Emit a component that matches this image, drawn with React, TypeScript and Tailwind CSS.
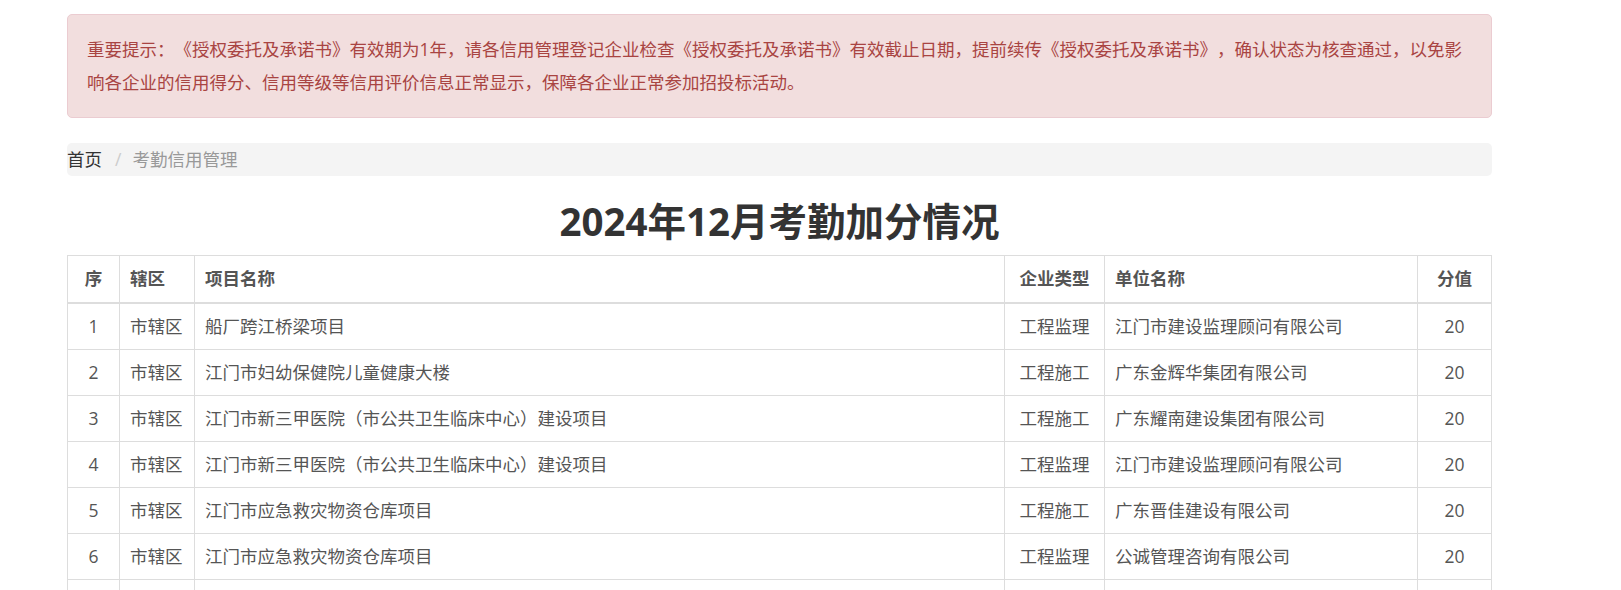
import React from "react";

const rows = [
  ["1", "市辖区", "船厂跨江桥梁项目", "工程监理", "江门市建设监理顾问有限公司", "20"],
  ["2", "市辖区", "江门市妇幼保健院儿童健康大楼", "工程施工", "广东金辉华集团有限公司", "20"],
  ["3", "市辖区", "江门市新三甲医院（市公共卫生临床中心）建设项目", "工程施工", "广东耀南建设集团有限公司", "20"],
  ["4", "市辖区", "江门市新三甲医院（市公共卫生临床中心）建设项目", "工程监理", "江门市建设监理顾问有限公司", "20"],
  ["5", "市辖区", "江门市应急救灾物资仓库项目", "工程施工", "广东晋佳建设有限公司", "20"],
  ["6", "市辖区", "江门市应急救灾物资仓库项目", "工程监理", "公诚管理咨询有限公司", "20"],
];

const td = "border border-[#ddd] px-[10px] py-[10px] leading-[25px] whitespace-nowrap";
const th = "border border-b-2 border-[#ddd] px-[10px] pt-[10px] pb-[11px] font-bold leading-[25px] whitespace-nowrap";

export default function App() {
  return (
    <div className="h-[590px] overflow-hidden bg-white font-['Open_Sans','Noto_Sans_CJK_SC',sans-serif] text-[17.5px] text-[#333] [text-spacing-trim:space-all]">
      <div className="ml-[67px] w-[1425px] pt-[14px]">
        <div className="rounded-[5px] border border-[#ebccd1] bg-[#f2dede] px-[19px] py-[18px] leading-[33px] text-[#a94442]">
          重要提示：《授权委托及承诺书》有效期为1年，请各信用管理登记企业检查《授权委托及承诺书》有效截止日期，提前续传《授权委托及承诺书》，确认状态为核查通过，以免影
          <br />
          响各企业的信用得分、信用等级等信用评价信息正常显示，保障各企业正常参加招投标活动。
        </div>

        <div className="mt-[25px] flex h-[33px] items-center rounded-[5px] bg-[#f4f4f4] leading-[25px]">
          <span className="text-[#333]">首页</span>
          <span className="pl-[13px] pr-[11px] text-[#ccc]">/</span>
          <span className="text-[#999]">考勤信用管理</span>
        </div>

        <h2 className="mt-[25px] mb-[12.5px] text-center text-[38.5px] font-bold leading-[41px] text-[#333]">
          2024年12月考勤加分情况
        </h2>

        <table className="w-full table-fixed border-collapse border border-[#ddd] text-[#555]">
          <colgroup>
            <col className="w-[52px]" />
            <col className="w-[75px]" />
            <col />
            <col className="w-[100px]" />
            <col className="w-[313px]" />
            <col className="w-[74px]" />
          </colgroup>
          <thead>
            <tr>
              <th className={`${th} text-center`}>序</th>
              <th className={`${th} text-left`}>辖区</th>
              <th className={`${th} text-left`}>项目名称</th>
              <th className={`${th} text-center`}>企业类型</th>
              <th className={`${th} text-left`}>单位名称</th>
              <th className={`${th} text-center`}>分值</th>
            </tr>
          </thead>
          <tbody>
            {rows.map((r) => (
              <tr key={r[0]}>
                <td className={`${td} text-center`}>{r[0]}</td>
                <td className={td}>{r[1]}</td>
                <td className={td}>{r[2]}</td>
                <td className={`${td} text-center`}>{r[3]}</td>
                <td className={td}>{r[4]}</td>
                <td className={`${td} text-center`}>{r[5]}</td>
              </tr>
            ))}
            <tr>
              <td className={td}>&nbsp;</td>
              <td className={td}>&nbsp;</td>
              <td className={td}>&nbsp;</td>
              <td className={td}>&nbsp;</td>
              <td className={td}>&nbsp;</td>
              <td className={td}>&nbsp;</td>
            </tr>
          </tbody>
        </table>
      </div>
    </div>
  );
}
